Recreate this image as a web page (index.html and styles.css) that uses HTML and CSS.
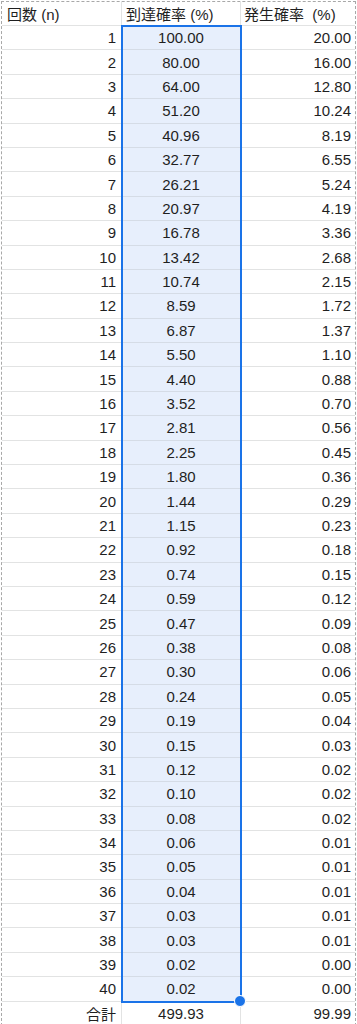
FILE: index.html
```html
<!DOCTYPE html>
<html lang="ja">
<head>
<meta charset="utf-8">
<link rel="stylesheet" href="styles.css">
</head>
<body>
<div class="sheet">
  <div class="cell head">回数 (n)</div><div class="cell head hb">到達確率 (%)</div><div class="cell head hc">発生確率&nbsp; (%)</div>
  <div class="cell n">1</div><div class="cell r">100.00</div><div class="cell p">20.00</div>
  <div class="cell n">2</div><div class="cell r">80.00</div><div class="cell p">16.00</div>
  <div class="cell n">3</div><div class="cell r">64.00</div><div class="cell p">12.80</div>
  <div class="cell n">4</div><div class="cell r">51.20</div><div class="cell p">10.24</div>
  <div class="cell n">5</div><div class="cell r">40.96</div><div class="cell p">8.19</div>
  <div class="cell n">6</div><div class="cell r">32.77</div><div class="cell p">6.55</div>
  <div class="cell n">7</div><div class="cell r">26.21</div><div class="cell p">5.24</div>
  <div class="cell n">8</div><div class="cell r">20.97</div><div class="cell p">4.19</div>
  <div class="cell n">9</div><div class="cell r">16.78</div><div class="cell p">3.36</div>
  <div class="cell n">10</div><div class="cell r">13.42</div><div class="cell p">2.68</div>
  <div class="cell n">11</div><div class="cell r">10.74</div><div class="cell p">2.15</div>
  <div class="cell n">12</div><div class="cell r">8.59</div><div class="cell p">1.72</div>
  <div class="cell n">13</div><div class="cell r">6.87</div><div class="cell p">1.37</div>
  <div class="cell n">14</div><div class="cell r">5.50</div><div class="cell p">1.10</div>
  <div class="cell n">15</div><div class="cell r">4.40</div><div class="cell p">0.88</div>
  <div class="cell n">16</div><div class="cell r">3.52</div><div class="cell p">0.70</div>
  <div class="cell n">17</div><div class="cell r">2.81</div><div class="cell p">0.56</div>
  <div class="cell n">18</div><div class="cell r">2.25</div><div class="cell p">0.45</div>
  <div class="cell n">19</div><div class="cell r">1.80</div><div class="cell p">0.36</div>
  <div class="cell n">20</div><div class="cell r">1.44</div><div class="cell p">0.29</div>
  <div class="cell n">21</div><div class="cell r">1.15</div><div class="cell p">0.23</div>
  <div class="cell n">22</div><div class="cell r">0.92</div><div class="cell p">0.18</div>
  <div class="cell n">23</div><div class="cell r">0.74</div><div class="cell p">0.15</div>
  <div class="cell n">24</div><div class="cell r">0.59</div><div class="cell p">0.12</div>
  <div class="cell n">25</div><div class="cell r">0.47</div><div class="cell p">0.09</div>
  <div class="cell n">26</div><div class="cell r">0.38</div><div class="cell p">0.08</div>
  <div class="cell n">27</div><div class="cell r">0.30</div><div class="cell p">0.06</div>
  <div class="cell n">28</div><div class="cell r">0.24</div><div class="cell p">0.05</div>
  <div class="cell n">29</div><div class="cell r">0.19</div><div class="cell p">0.04</div>
  <div class="cell n">30</div><div class="cell r">0.15</div><div class="cell p">0.03</div>
  <div class="cell n">31</div><div class="cell r">0.12</div><div class="cell p">0.02</div>
  <div class="cell n">32</div><div class="cell r">0.10</div><div class="cell p">0.02</div>
  <div class="cell n">33</div><div class="cell r">0.08</div><div class="cell p">0.02</div>
  <div class="cell n">34</div><div class="cell r">0.06</div><div class="cell p">0.01</div>
  <div class="cell n">35</div><div class="cell r">0.05</div><div class="cell p">0.01</div>
  <div class="cell n">36</div><div class="cell r">0.04</div><div class="cell p">0.01</div>
  <div class="cell n">37</div><div class="cell r">0.03</div><div class="cell p">0.01</div>
  <div class="cell n">38</div><div class="cell r">0.03</div><div class="cell p">0.01</div>
  <div class="cell n">39</div><div class="cell r">0.02</div><div class="cell p">0.00</div>
  <div class="cell n">40</div><div class="cell r">0.02</div><div class="cell p">0.00</div>
  <div class="cell n">合計</div><div class="cell t">499.93</div><div class="cell p">99.99</div>
  <div class="selection"></div>
  <div class="handle"></div>
</div>
</body>
</html>
```
FILE: styles.css
```css
html, body {
  margin: 0;
  padding: 0;
  background: #ffffff;
}
body {
  font-family: "Liberation Sans", Arial, "Noto Sans CJK JP", sans-serif;
  font-size: 15px;
  color: #1f1f1f;
}
.sheet {
  position: relative;
  margin: 1px 0 0 1px;
  width: 355px;
  box-sizing: border-box;
  border-top: 1px dashed #a8a8a8;
  border-left: 1px dashed #a8a8a8;
  border-right: 1px dashed #a8a8a8;
  display: grid;
  grid-template-columns: 120px 119px 114px;
  grid-template-rows: 24px;
  grid-auto-rows: 24.4px;
  overflow: hidden;
}
.cell {
  box-sizing: border-box;
  border-bottom: 1px solid #e2e3e3;
  border-right: 1px solid #e2e3e3;
  display: flex;
  align-items: center;
  white-space: nowrap;
  padding: 0 5px;
  overflow: hidden;
}
.cell:nth-child(3n) {
  border-right: none;
}
.head {
  justify-content: flex-start;
  padding-left: 5px;
  padding-right: 2px;
}
.hb {
  padding-left: 4px;
}
.hc {
  padding-left: 3px;
}
.n {
  justify-content: flex-end;
}
.r {
  justify-content: center;
  background: #e7effc;
  border-bottom-color: #d5dce6;
}
.t {
  justify-content: center;
}
.p {
  justify-content: flex-end;
  padding-right: 4px;
}
.selection {
  position: absolute;
  left: 119px;
  top: 23px;
  width: 121px;
  height: 978px;
  box-sizing: border-box;
  border: 2px solid #1a73e8;
  pointer-events: none;
}
.handle {
  position: absolute;
  left: 233px;
  top: 994px;
  width: 10px;
  height: 10px;
  border-radius: 50%;
  background: #1a73e8;
  border: 1px solid #ffffff;
  box-sizing: content-box;
  margin: -1px 0 0 -1px;
}
```
